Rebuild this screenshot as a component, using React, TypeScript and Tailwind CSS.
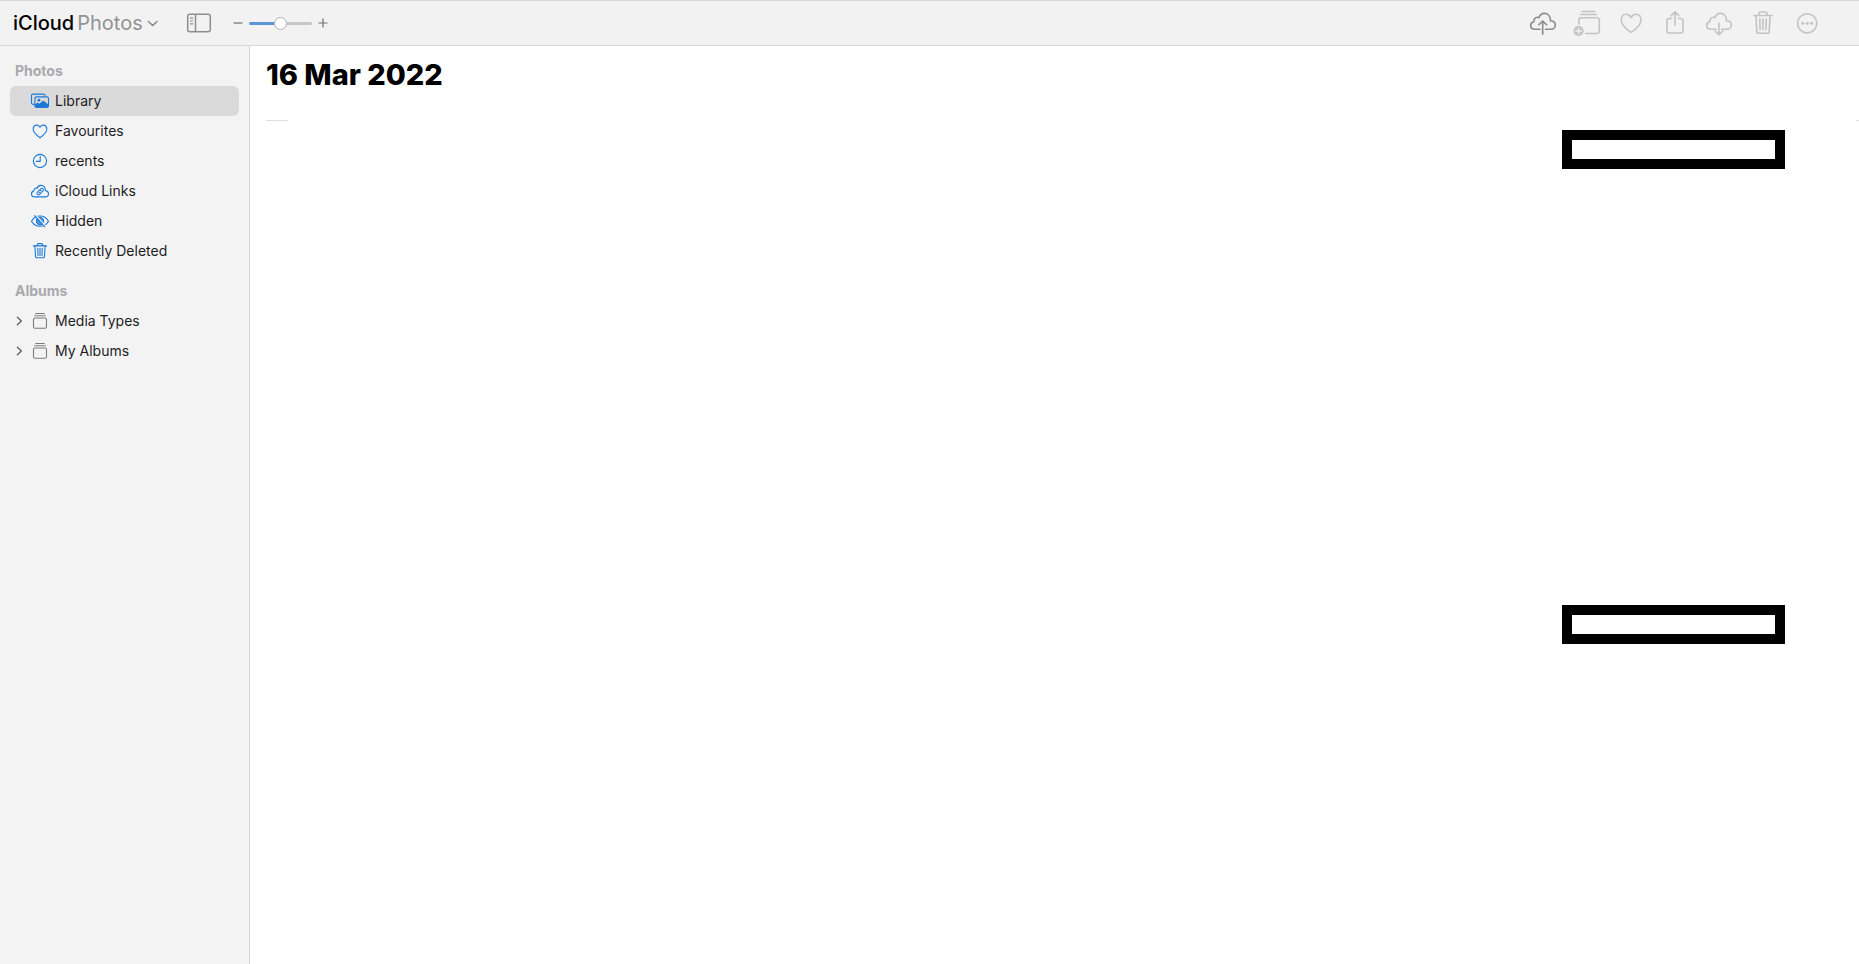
import { useState, type ReactNode } from "react";

type IconProps = { className?: string };

const CLOUD =
  "M11 20.3H6.2C3.6 20.3 1.7 18.7 1.7 16.5c0-1.9 1.3-3.4 3.2-3.8C4.7 10.1 6.2 8.3 8.3 8.3c.7 0 1.2.1 1.7.4C10.9 6 12.9 4.4 15.3 4.4c3.6 0 6.1 2.8 6.1 6.5v.8C24.3 11.8 26.3 13.5 26.3 16c0 2.5-1.9 4.3-4.5 4.3H16.5";

function ToolIcon({ children }: { children: ReactNode }) {
  return (
    <svg
      viewBox="0 0 28 28"
      className="size-7"
      fill="none"
      stroke="currentColor"
      strokeWidth="1.6"
      strokeLinecap="round"
      strokeLinejoin="round"
      aria-hidden="true"
    >
      {children}
    </svg>
  );
}

function SideIcon({ children }: { children: ReactNode }) {
  return (
    <svg
      viewBox="0 0 20 20"
      className="size-5 shrink-0"
      fill="none"
      stroke="currentColor"
      strokeWidth="1.1"
      strokeLinecap="round"
      strokeLinejoin="round"
      aria-hidden="true"
    >
      {children}
    </svg>
  );
}

const tools = [
  {
    label: "Upload",
    enabled: true,
    icon: (
      <>
        <path d={CLOUD} />
        <path d="M13.7 25.2V12.2M9.8 15.8l3.9-3.8 3.9 3.8" />
      </>
    ),
  },
  {
    label: "Add to Album",
    enabled: false,
    icon: (
      <>
        <path d="M9.2 2.5h12.6M7.6 5.5h15.8" />
        <path d="M5.9 15v-3.8a2.4 2.4 0 0 1 2.4-2.4h15.6a2.4 2.4 0 0 1 2.4 2.4v10.9a2.4 2.4 0 0 1-2.4 2.4H12.6" />
        <circle cx="5.6" cy="22" r="5.1" fill="currentColor" stroke="none" />
        <path d="M5.6 19.2v5.6M2.8 22h5.6" stroke="#f2f2f2" strokeWidth="1.3" />
      </>
    ),
  },
  {
    label: "Favourite",
    enabled: false,
    icon: (
      <path d="M14.1 23.4C8.9 19.8 4.2 15.7 4.2 10.9 4.2 7.6 6.4 5.3 9.2 5.3c2.2 0 3.9 1.2 4.9 3.3 1-2.1 2.700-3.300 4.900-3.300 2.800 0 5 2.300 5 5.600 0 4.800-4.700 8.900-9.900 12.500z" />
    ),
  },
  {
    label: "Share",
    enabled: false,
    icon: (
      <>
        <path d="M10.5 9.5H8.2A2.2 2.2 0 0 0 6 11.7v10.1A2.2 2.2 0 0 0 8.2 24h11.600a2.200 2.200 0 0 0 2.200-2.200V11.700a2.200 2.200 0 0 0-2.200-2.200h-2.300" />
        <path d="M14 16.2V3M10.3 6.6L14 2.9l3.7 3.7" />
      </>
    ),
  },
  {
    label: "Download",
    enabled: false,
    icon: (
      <>
        <path d={CLOUD} />
        <path d="M13.9 14V25.6M10 22l3.9 3.8 3.9-3.8" />
      </>
    ),
  },
  {
    label: "Delete",
    enabled: false,
    icon: (
      <>
        <path d="M4.8 6.5h18.400M10 6.300V5a2 2 0 0 1 2-2h4a2 2 0 0 1 2 2v1.300" />
        <path d="M6.9 6.7l.9 15.7a1.9 1.9 0 0 0 1.9 1.8h8.6a1.9 1.9 0 0 0 1.9-1.8l.9-15.7" />
        <path d="M10.8 10l.3 10.8M14 10v10.8M17.2 10l-.3 10.8" />
      </>
    ),
  },
  {
    label: "More",
    enabled: false,
    icon: (
      <>
        <circle cx="14.2" cy="14.3" r="9.6" />
        <g fill="currentColor" stroke="none">
          <circle cx="9.8" cy="14.3" r="1.5" />
          <circle cx="14.2" cy="14.3" r="1.5" />
          <circle cx="18.6" cy="14.3" r="1.5" />
        </g>
      </>
    ),
  },
];

const library = [
  {
    label: "Library",
    icon: (
      <>
        <path d="M4 13.4H3A1.6 1.6 0 0 1 1.5 12V4.6A1.6 1.6 0 0 1 3 3.1h10.6a1.5 1.5 0 0 1 1.5 1.6" />
        <rect x="4.9" y="5.9" width="13.6" height="10.3" rx="1.7" />
        <circle cx="8.9" cy="9.2" r="1.4" fill="currentColor" stroke="none" />
        <path
          d="M5.1 14.2l2.5-2 1.9 1.3 3.8-3.3 5 4v.8a1.3 1.3 0 0 1-1.3 1.2H6.4a1.3 1.3 0 0 1-1.3-1.2z"
          fill="currentColor"
        />
      </>
    ),
  },
  {
    label: "Favourites",
    icon: (
      <path d="M10 16.8C6.3 14.200 3.200 11.500 3.200 8.100 3.200 5.700 4.800 4.100 6.800 4.100c1.400 0 2.500.8 3.200 2.200.7-1.400 1.800-2.200 3.200-2.200 2 0 3.600 1.600 3.600 4 0 3.400-3.100 6.100-6.800 8.700z" />
    ),
  },
  {
    label: "recents",
    icon: (
      <>
        <circle cx="10" cy="10" r="6.6" />
        <path d="M10.2 5.6V10.4H6.2" />
      </>
    ),
  },
  {
    label: "iCloud Links",
    icon: (
      <>
        <path d="M4.7 15.9h10.5c1.900 0 3.300-1.300 3.300-3.100 0-1.700-1.300-3-3.100-3.200.1-3.100-1.800-5.200-4.400-5.200-1.900 0-3.300 1.100-4 2.900-1.700-.5-3.200.7-3.100 2.600-1.500.4-2.400 1.600-2.400 3 0 1.700 1.300 3 3.200 3z" />
        <g transform="rotate(-45 10.200 10.600)" strokeWidth="1">
          <path d="M9 12.200H7.900a1.600 1.600 0 0 1 0-3.200h2a1.600 1.600 0 0 1 1.500 2" />
          <path d="M11.400 9h1.100a1.600 1.600 0 0 1 0 3.200h-2a1.600 1.600 0 0 1-1.500-2" />
        </g>
      </>
    ),
  },
  {
    label: "Hidden",
    icon: (
      <>
        <path d="M1.5 10.2C3.2 7.2 6.3 5 10 5s6.800 2.200 8.500 5.200c-1.700 3-4.800 5.100-8.500 5.100s-6.800-2.100-8.500-5.100z" />
        <circle cx="10" cy="10.1" r="3.6" fill="currentColor" fillOpacity="0.75" />
        <path d="M5.6 4.1L15.700 15.200" stroke="#f3f3f3" strokeWidth="1.3" />
        <path d="M4.6 4.6L15 16" />
      </>
    ),
  },
  {
    label: "Recently Deleted",
    icon: (
      <>
        <path d="M3.4 4.9h13.200M7.300 4.700V3.800a1.200 1.200 0 0 1 1.200-1.200h3a1.200 1.200 0 0 1 1.200 1.200v.9" />
        <path d="M4.9 5l.6 10.600a1.300 1.300 0 0 0 1.300 1.200h6.400a1.300 1.300 0 0 0 1.300-1.200L15.100 5" />
        <path d="M7.800 7.300l.2 7.100M10 7.300v7.100M12.200 7.300l-.2 7.100" />
      </>
    ),
  },
];

const albums = ["Media Types", "My Albums"];

function Chevron({ className }: IconProps) {
  return (
    <svg
      viewBox="0 0 10 10"
      className={className}
      fill="none"
      stroke="currentColor"
      strokeWidth="1.3"
      strokeLinecap="round"
      strokeLinejoin="round"
      aria-hidden="true"
    >
      <path d="M3.4 1.2L7.400 5 3.400 8.800" />
    </svg>
  );
}

function SidebarHeading({ children }: { children: ReactNode }) {
  return (
    <h2 className="flex h-[30px] items-center px-[5px] text-sm font-bold text-[#a9a9ad]">
      {children}
    </h2>
  );
}

export default function App() {
  const [selected, setSelected] = useState("Library");
  const [zoom, setZoom] = useState(50);

  return (
    <div className="flex min-h-screen flex-col bg-white font-['Inter',sans-serif] text-[#1d1d1f]">
      <header className="flex h-[46px] items-center border-y border-[#d8d8d8] bg-[#f2f2f2] pr-[30px] pl-[13px]">
        <button type="button" className="flex items-center gap-[3px] text-xl">
          <span className="font-medium text-black">iCloud</span>
          <span className="text-[#929292]">Photos</span>
          <svg
            viewBox="0 0 14 10"
            className="h-[10px] w-[14px] text-[#808080]"
            fill="none"
            stroke="currentColor"
            strokeWidth="1.3"
            strokeLinecap="round"
            strokeLinejoin="round"
            aria-hidden="true"
          >
            <path d="M2.4 3.5L6.700 7.500l4.300-4" />
          </svg>
        </button>

        <button type="button" aria-label="Toggle sidebar" className="ml-[26px] text-[#8e8e8e]">
          <svg
            viewBox="0 0 26 20"
            className="h-5 w-[26px]"
            fill="none"
            stroke="currentColor"
            strokeWidth="1.5"
            aria-hidden="true"
          >
            <rect x="1.7" y="1.2" width="22.600" height="17.600" rx="2.200" />
            <path d="M9.5 1.2v17.600" />
            <path d="M4 5.2h3.200M4 8h3.200M4 10.800h3.200" strokeWidth="1.2" />
          </svg>
        </button>

        <div className="ml-5 flex items-center text-[#6e6e6e]">
          <button type="button" aria-label="Zoom out" onClick={() => setZoom(Math.max(0, zoom - 10))}>
            <svg viewBox="0 0 12 12" className="size-3" stroke="currentColor" strokeWidth="1.2" aria-hidden="true">
              <path d="M1.5 6h9" />
            </svg>
          </button>
          <input
            type="range"
            aria-label="Photo size"
            min={0}
            max={100}
            value={zoom}
            onChange={(e) => setZoom(Number(e.target.value))}
            style={{ backgroundSize: `${zoom}% 100%` }}
            className="mx-[5px] h-[3px] w-[63px] appearance-none rounded-full bg-[#c8c8c8] bg-[linear-gradient(#5b95d5,#5b95d5)] bg-no-repeat [&::-webkit-slider-thumb]:size-[13px] [&::-webkit-slider-thumb]:appearance-none [&::-webkit-slider-thumb]:rounded-full [&::-webkit-slider-thumb]:border [&::-webkit-slider-thumb]:border-[#b4b4b4] [&::-webkit-slider-thumb]:bg-white"
          />
          <button type="button" aria-label="Zoom in" onClick={() => setZoom(Math.min(100, zoom + 10))}>
            <svg viewBox="0 0 12 12" className="size-3" stroke="currentColor" strokeWidth="1.2" aria-hidden="true">
              <path d="M1.5 6h9M6 1.5v9" />
            </svg>
          </button>
        </div>

        <div className="ml-auto flex">
          {tools.map((tool) => (
            <button
              key={tool.label}
              type="button"
              aria-label={tool.label}
              disabled={!tool.enabled}
              className="flex w-11 justify-center text-[#8a8a8a] disabled:text-[#c3c3c3]"
            >
              <ToolIcon>{tool.icon}</ToolIcon>
            </button>
          ))}
        </div>
      </header>

      <div className="flex flex-1">
        <nav aria-label="Photos" className="w-[250px] shrink-0 border-r border-[#d6d6d6] bg-[#f3f3f3] p-[10px]">
          <SidebarHeading>Photos</SidebarHeading>
          <ul>
            {library.map((item) => (
              <li key={item.label}>
                <button
                  type="button"
                  aria-pressed={selected === item.label}
                  onClick={() => setSelected(item.label)}
                  className="flex h-[30px] w-full items-center gap-[5px] rounded-md pl-5 text-sm aria-pressed:bg-[#dadada]"
                >
                  <span className="text-[#1a78d8]">
                    <SideIcon>{item.icon}</SideIcon>
                  </span>
                  {item.label}
                </button>
              </li>
            ))}
          </ul>
          <div className="mt-[10px]">
            <SidebarHeading>Albums</SidebarHeading>
            <ul>
              {albums.map((label) => (
                <li key={label}>
                  <button type="button" className="flex h-[30px] w-full items-center gap-[5px] text-sm">
                    <span className="w-[15px] pl-1 text-[#5f5f5f]">
                      <Chevron className="size-[10px]" />
                    </span>
                    <span className="text-[#7c7c7c]">
                      <SideIcon>
                        <path d="M5.7 2.5h8.600M4.700 4.700h10.600" />
                        <rect x="3.5" y="7" width="13" height="10.300" rx="1.5" />
                      </SideIcon>
                    </span>
                    {label}
                  </button>
                </li>
              ))}
            </ul>
          </div>
        </nav>

        <main className="min-w-0 flex-1">
          <h1 className="px-4 pt-[11px] text-[29px] leading-9 font-extrabold text-black">16 Mar 2022</h1>
          <div className="mt-[27px] flex justify-between pl-4">
            <div className="h-px w-[22px] bg-[#dedede]" />
            <div className="h-px w-[3px] bg-[#dedede]" />
          </div>
          <div className="mt-[9px] flex flex-col items-end gap-[436px] pr-[74px]">
            <div className="h-[39px] w-[223px] border-[10px] border-black" />
            <div className="h-[39px] w-[223px] border-[10px] border-black" />
          </div>
        </main>
      </div>
    </div>
  );
}
